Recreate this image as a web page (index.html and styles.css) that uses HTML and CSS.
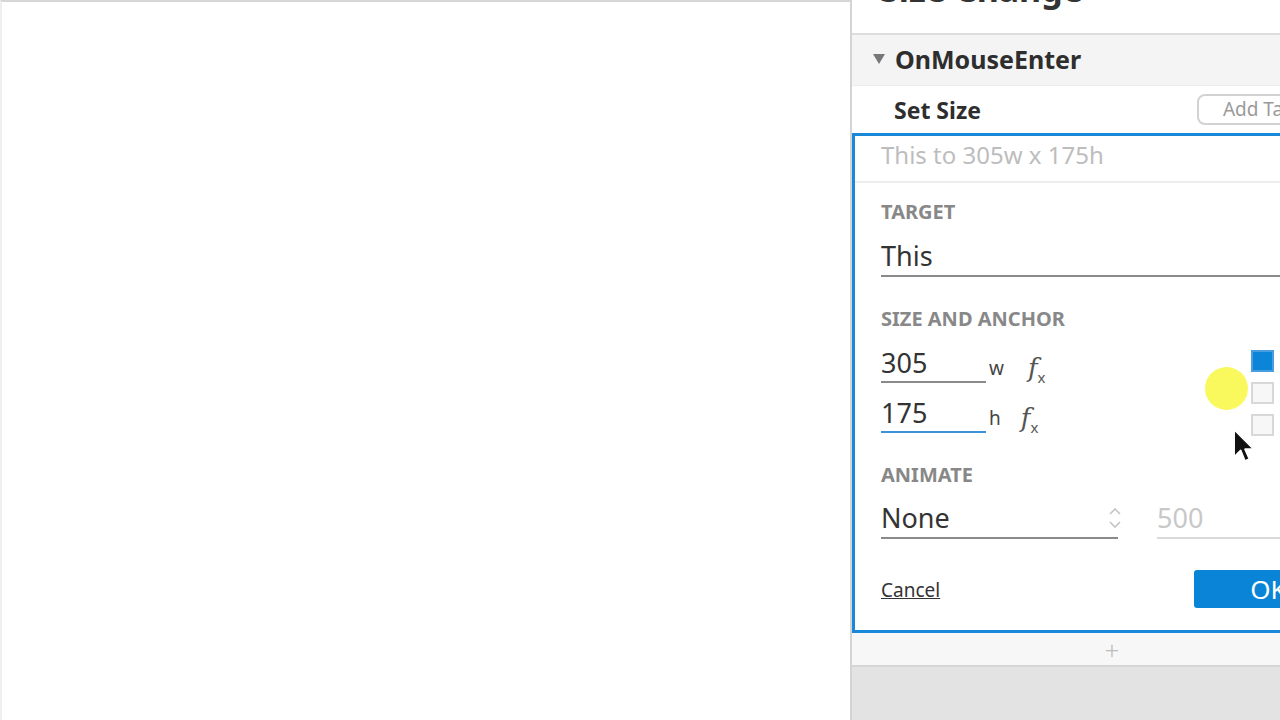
FILE: index.html
```html
<!DOCTYPE html>
<html>
<head>
    <title>Size Change - Interactions</title>
    <link rel="stylesheet" href="styles.css">
</head>
<body>

    <div id="canvasArea"></div>

    <div id="panel">
        <div class="interactionTitle"><span>Size Change</span></div>

        <div class="eventRow">
            <span class="caret"></span>
            <span class="eventName">OnMouseEnter</span>
        </div>

        <div class="actionRow">
            <span class="actionName">Set Size</span>
            <span class="addTarget">Add Target</span>
        </div>

        <div class="actionEditor">
            <div class="actionSummary">This to 305w x 175h</div>

            <div class="editorBody">
                <div class="fieldLabel">TARGET</div>
                <div class="textField wide">This</div>

                <div class="fieldLabel spaced">SIZE AND ANCHOR</div>
                <div class="sizeSection">
                    <div class="sizeFields">
                        <div class="sizeRow">
                            <span class="textField num">305</span>
                            <span class="unit">w</span>
                            <span class="fx">f<sub>x</sub></span>
                        </div>
                        <div class="sizeRow second">
                            <span class="textField num focused">175</span>
                            <span class="unit">h</span>
                            <span class="fx">f<sub>x</sub></span>
                        </div>
                    </div>
                    <div class="anchorGrid">
                        <span class="anchor selected"></span>
                        <span class="anchor"></span>
                        <span class="anchor"></span>
                        <span class="anchor"></span>
                        <span class="anchor"></span>
                        <span class="anchor"></span>
                        <span class="anchor"></span>
                        <span class="anchor"></span>
                        <span class="anchor"></span>
                    </div>
                </div>

                <div class="fieldLabel animateLabel">ANIMATE</div>
                <div class="animateRow">
                    <div class="textField select">
                        <span>None</span>
                        <svg class="updown" width="14" height="26" viewBox="0 0 14 26">
                            <path d="M2 9 L7 4 L12 9" fill="none" stroke="#c4c4c4" stroke-width="1.6"/>
                            <path d="M2 17 L7 22 L12 17" fill="none" stroke="#c4c4c4" stroke-width="1.6"/>
                        </svg>
                    </div>
                    <div class="textField duration">500</div>
                </div>

                <div class="buttonRow">
                    <a class="cancelLink">Cancel</a>
                    <span class="okButton">OK</span>
                </div>
            </div>
        </div>

        <div class="addRow">+</div>
        <div class="panelFooter"></div>
    </div>

    <!-- mouse highlight from the screen recording -->
    <div class="clickHighlight"></div>
    <svg class="pointer" width="26" height="38" viewBox="0 0 24 34">
        <path d="M2 1 L2 26 L8 20 L12 30 L16 28 L12 19 L20 19 Z" fill="#111" stroke="#fff" stroke-width="1.5" stroke-linejoin="round"/>
    </svg>

</body>
</html>
```

FILE: styles.css
```css
body {
    margin: 0;
    overflow: hidden;
    width: 1280px;
    height: 720px;
    display: flex;
    background: #fff;
    font-family: "Noto Sans", "Open Sans", sans-serif;
    color: #333;
}

#canvasArea {
    width: 850px;
    flex: none;
    border-top: 2px solid #d6d6d6;
    border-left: 2px solid #efefef;
    box-sizing: border-box;
}

#panel {
    width: 520px;
    flex: none;
    display: flex;
    flex-direction: column;
    border-left: 2px solid #d4d4d4;
}

.interactionTitle {
    height: 33px;
    overflow: hidden;
    border-bottom: 2px solid #dedede;
    padding-left: 28px;
}
.interactionTitle span {
    display: block;
    margin-top: -31px;
    font-size: 34px;
    font-weight: bold;
    line-height: 40px;
}

.eventRow {
    height: 50px;
    background: #f4f4f4;
    display: flex;
    align-items: center;
    padding-left: 21px;
    border-bottom: 1px solid #ececec;
}
.caret {
    width: 0;
    height: 0;
    border-left: 6px solid transparent;
    border-right: 6px solid transparent;
    border-top: 10px solid #777;
    margin-right: 10px;
    margin-top: -2px;
}
.eventName {
    font-size: 25px;
    font-weight: bold;
    color: #2e2e2e;
    margin-top: -3px;
}

.actionRow {
    height: 47px;
    display: flex;
    align-items: center;
    padding-left: 42px;
    padding-right: 26px;
}
.actionName {
    font-size: 23px;
    font-weight: bold;
    color: #2e2e2e;
}
.addTarget {
    margin-left: auto;
    height: 27px;
    line-height: 27px;
    padding: 0 24px;
    border: 2px solid #d2d2d2;
    border-radius: 8px;
    font-size: 19px;
    color: #9a9a9a;
}

.actionEditor {
    border: 3px solid #1a88d8;
    height: 500px;
    box-sizing: border-box;
}

.actionSummary {
    height: 47px;
    line-height: 38px;
    padding-left: 26px;
    font-size: 24px;
    color: #bdbdbd;
    border-bottom: 2px solid #ececec;
    box-sizing: border-box;
}

.editorBody {
    padding: 0 26px 22px 26px;
}

.fieldLabel {
    margin-top: 19px;
    font-size: 20px;
    line-height: 20px;
    font-weight: bold;
    color: #888;
}
.fieldLabel.spaced {
    margin-top: 32px;
}
.fieldLabel.animateLabel {
    margin-top: 29px;
}

.textField {
    font-size: 27px;
    line-height: 32px;
    color: #333;
    border-bottom: 2px solid #8a8a8a;
    padding-bottom: 3px;
}
.textField.wide {
    margin-top: 18px;
}

.sizeSection {
    display: flex;
    margin-top: 18px;
}
.sizeRow {
    display: flex;
    align-items: flex-end;
}
.sizeRow.second {
    margin-top: 14px;
}
.textField.num {
    width: 105px;
    padding-bottom: 2px;
}
.textField.focused {
    border-bottom-color: #3b92d8;
}
.unit {
    font-size: 19px;
    color: #444;
    margin-left: 3px;
    margin-bottom: 2px;
}
.fx {
    font-family: "DejaVu Serif", serif;
    font-style: italic;
    font-size: 26px;
    color: #555;
    margin-left: 24px;
    margin-bottom: -4px;
}
.sizeRow.second .fx {
    margin-left: 20px;
}
.fx sub {
    font-size: 15px;
    font-style: normal;
    font-family: "Noto Sans", sans-serif;
}

.anchorGrid {
    margin-left: auto;
    margin-right: 5px;
    margin-top: 3px;
    display: grid;
    grid-template-columns: repeat(3, 23px);
    grid-auto-rows: 22px;
    gap: 10px 9px;
}
.anchor {
    border: 2px solid #d8d8d8;
    background: #f7f7f7;
    box-sizing: border-box;
}
.anchor.selected {
    background: #0c84d8;
    border-color: #4a9ede;
}

.animateRow {
    display: flex;
    margin-top: 17px;
    gap: 39px;
}
.textField.select {
    width: 237px;
    display: flex;
    align-items: center;
    justify-content: space-between;
}
.updown {
    margin-right: -4px;
}
.textField.duration {
    flex: 1;
    color: #c8c8c8;
    border-bottom-color: #dadada;
}

.buttonRow {
    margin-top: 31px;
    display: flex;
    align-items: center;
    justify-content: space-between;
}
.cancelLink {
    font-size: 19px;
    color: #333;
    text-decoration: underline;
    margin-top: 2px;
}
.okButton {
    width: 149px;
    height: 38px;
    line-height: 38px;
    text-align: center;
    background: #0a84d6;
    color: #fff;
    font-size: 26px;
    border-radius: 3px;
}

.addRow {
    height: 32px;
    line-height: 34px;
    text-align: center;
    background: #f7f7f7;
    color: #bdbdbd;
    font-size: 26px;
    font-weight: 300;
    border-bottom: 2px solid #d6d6d6;
}
.panelFooter {
    flex: 1;
    background: #e3e3e3;
}

.clickHighlight {
    position: absolute;
    left: 1205px;
    top: 367px;
    width: 43px;
    height: 43px;
    border-radius: 50%;
    background: #f9f95e;
}
.pointer {
    position: absolute;
    left: 1232px;
    top: 428px;
}
```
